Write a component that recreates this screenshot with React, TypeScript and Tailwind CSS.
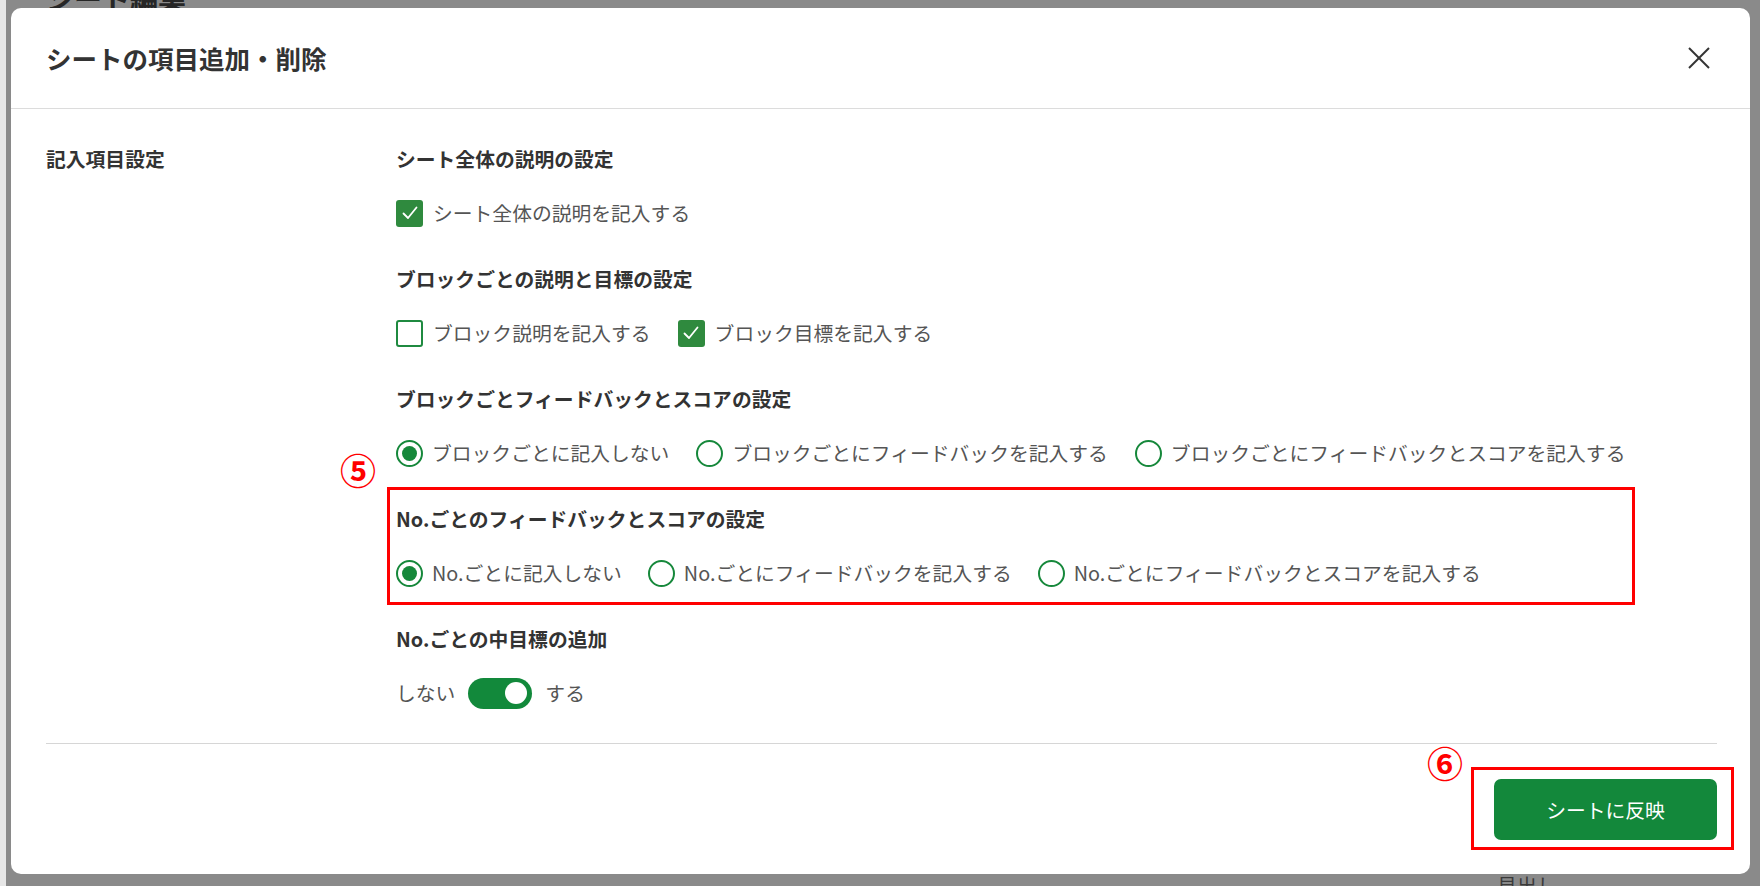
import { useState } from "react";

const font = { fontFamily: '"Noto Sans CJK JP", "Noto Sans", sans-serif' };

const CheckIcon = () => (
  <svg width="20" height="20" viewBox="0 0 20 20" fill="none">
    <polyline points="3.5,10.5 8,15 16.5,4.5" stroke="white" strokeWidth="1.8" strokeLinecap="round" strokeLinejoin="round" />
  </svg>
);

const CheckboxOption = ({ label, checked, onChange }: { label: string; checked: boolean; onChange: () => void }) => (
  <label className="flex items-center gap-[10px] cursor-pointer" onClick={onChange}>
    <span
      className={
        checked
          ? "flex h-[27px] w-[27px] items-center justify-center rounded-[3px] bg-[#2f8a3e]"
          : "flex h-[27px] w-[27px] items-center justify-center rounded-[3px] border-2 border-[#1f8a40] bg-white"
      }
    >
      {checked ? <CheckIcon /> : null}
    </span>
    <span className="text-[19.8px] leading-[28px] text-[#555]">{label}</span>
  </label>
);

const RadioOption = ({ label, checked, onChange }: { label: string; checked: boolean; onChange: () => void }) => (
  <label className="flex items-center gap-[9px] cursor-pointer" onClick={onChange}>
    <span className="flex h-[27px] w-[27px] items-center justify-center rounded-full border-2 border-[#16883b] bg-white">
      {checked ? <span className="h-[15px] w-[15px] rounded-full bg-[#16883b]" /> : null}
    </span>
    <span className="text-[19.8px] leading-[28px] text-[#555]">{label}</span>
  </label>
);

const Section = ({ title, children }: { title: string; children: React.ReactNode }) => (
  <div className="flex flex-col gap-[26px]">
    <h4 className="text-[19.8px] font-bold leading-[28px] text-[#333]">{title}</h4>
    <div className="flex h-[28px] items-center">{children}</div>
  </div>
);

export default function App() {
  const [sheetDesc, setSheetDesc] = useState(true);
  const [blockDesc, setBlockDesc] = useState(false);
  const [blockGoal, setBlockGoal] = useState(true);
  const [blockFb, setBlockFb] = useState(0);
  const [noFb, setNoFb] = useState(0);
  const [midGoal, setMidGoal] = useState(true);

  const blockOptions = ["ブロックごとに記入しない", "ブロックごとにフィードバックを記入する", "ブロックごとにフィードバックとスコアを記入する"];
  const noOptions = ["No.ごとに記入しない", "No.ごとにフィードバックを記入する", "No.ごとにフィードバックとスコアを記入する"];

  return (
    <div className="relative flex h-[886px] w-full flex-col justify-between overflow-hidden bg-[#8a8a8a]" style={font}>
      <div className="absolute left-0 top-0 h-full w-[6px] bg-[#e6e6e6]" />
      <div className="-mt-[20px] pl-[46px] text-[28px] font-bold leading-[36px] text-[#262626]">シート編集</div>
      <div className="-mb-[12px] pl-[1497px] text-[20px] leading-[24px] text-[#3a3a3a]">見出し</div>

      {/* modal */}
      <div className="absolute left-[11px] top-[8px] flex h-[866px] w-[1739px] flex-col rounded-[10px] bg-white">
        <div className="flex h-[101px] items-center justify-between border-b border-[#dcdcdc] pl-[35px] pr-[40px]">
          <h2 className="text-[25.5px] font-bold text-[#333]">シートの項目追加・削除</h2>
          <button className="text-[#333]">
            <svg width="22" height="22" viewBox="0 0 22 22" fill="none">
              <line x1="1" y1="1" x2="21" y2="21" stroke="#333" strokeWidth="2" />
              <line x1="21" y1="1" x2="1" y2="21" stroke="#333" strokeWidth="2" />
            </svg>
          </button>
        </div>

        <div className="flex flex-1 pl-[35px] pt-[36px]">
          <div className="w-[350px] text-[19.8px] font-bold leading-[28px] text-[#333]">記入項目設定</div>
          <div className="flex flex-col gap-[38px]">
            <Section title="シート全体の説明の設定">
              <CheckboxOption label="シート全体の説明を記入する" checked={sheetDesc} onChange={() => setSheetDesc(!sheetDesc)} />
            </Section>

            <Section title="ブロックごとの説明と目標の設定">
              <div className="flex items-center gap-[27px]">
                <CheckboxOption label="ブロック説明を記入する" checked={blockDesc} onChange={() => setBlockDesc(!blockDesc)} />
                <CheckboxOption label="ブロック目標を記入する" checked={blockGoal} onChange={() => setBlockGoal(!blockGoal)} />
              </div>
            </Section>

            <Section title="ブロックごとフィードバックとスコアの設定">
              <div className="flex items-center gap-[27px]">
                {blockOptions.map((o, i) => (
                  <RadioOption key={o} label={o} checked={blockFb === i} onChange={() => setBlockFb(i)} />
                ))}
              </div>
            </Section>

            <div className="relative">
              <span className="absolute -left-[56px] -top-[56px] text-[36px] font-bold leading-[40px] text-[#ff0000]">⑤</span>
              <div className="pointer-events-none absolute -bottom-[18px] -left-[9px] -top-[18px] w-[1248px] border-[3px] border-[#ff0000]" />
              <Section title="No.ごとのフィードバックとスコアの設定">
                <div className="flex items-center gap-[26px]">
                  {noOptions.map((o, i) => (
                    <RadioOption key={o} label={o} checked={noFb === i} onChange={() => setNoFb(i)} />
                  ))}
                </div>
              </Section>
            </div>

            <Section title="No.ごとの中目標の追加">
              <div className="flex items-center gap-[13px] text-[19.8px] leading-[28px] text-[#555]">
                <span>しない</span>
                <button
                  onClick={() => setMidGoal(!midGoal)}
                  className={
                    midGoal
                      ? "flex h-[31px] w-[64px] items-center justify-end rounded-full bg-[#12893b] px-[5px]"
                      : "flex h-[31px] w-[64px] items-center justify-start rounded-full bg-[#bdbdbd] px-[5px]"
                  }
                >
                  <span className="h-[22px] w-[22px] rounded-full bg-white" />
                </button>
                <span>する</span>
              </div>
            </Section>
          </div>
        </div>

        <div className="ml-[35px] mr-[33px] border-t border-[#d6d6d6]" />
        <div className="flex justify-end pb-[34px] pr-[33px] pt-[35px]">
          <div className="relative">
            <span className="absolute -left-[67px] -top-[37px] text-[36px] font-bold leading-[40px] text-[#ff0000]">⑥</span>
            <div className="pointer-events-none absolute -bottom-[10px] -left-[23px] -right-[17px] -top-[12px] border-[3px] border-[#ff0000]" />
            <button className="h-[61px] w-[223px] rounded-[7px] bg-[#13883b] text-[19.8px] text-white">シートに反映</button>
          </div>
        </div>
      </div>
    </div>
  );
}
